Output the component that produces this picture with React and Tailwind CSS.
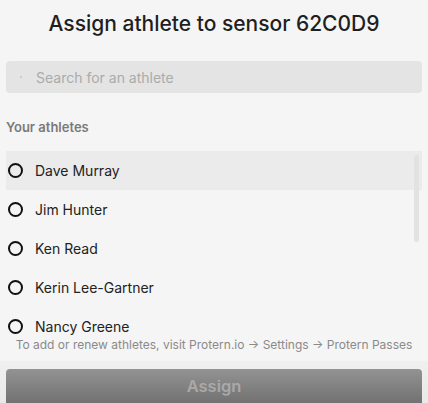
import React from 'react';

const athletes = ['Dave Murray', 'Jim Hunter', 'Ken Read', 'Kerin Lee-Gartner', 'Nancy Greene', 'Steve Podborski'];

const App = () => {
  return (
    <div
      className="w-[428px] h-[403px] overflow-hidden bg-[#f5f5f5] flex flex-col"
      style={{ fontFamily: 'Inter, "Noto Sans", sans-serif' }}
    >
      <h1 className="shrink-0 pt-[10px] h-[48px] text-center text-[21px] font-medium text-[#1f1f1f] leading-[28px]">
        Assign athlete to sensor 62C0D9
      </h1>

      <div className="shrink-0 mx-[6px] mt-[13px] h-[32px] rounded-[4px] bg-[#e4e4e4] flex items-center">
        <span className="ml-[14px] w-[2px] h-[2px] rounded-full bg-[#c4c4c4]" />
        <span className="ml-[14px] text-[14px] text-[#ababab]">Search for an athlete</span>
      </div>

      <div className="shrink-0 mt-[25px] px-[6px] text-[13px] font-semibold text-[#7a7a7a] leading-[18px]">
        Your athletes
      </div>

      <div className="shrink-0 relative mt-[15px] h-[186px] overflow-hidden">
        <ul className="flex flex-col">
          {athletes.map((name, i) => (
            <li
              key={name}
              className={
                'shrink-0 mx-[6px] h-[39px] flex items-center ' +
                (i === 0 ? 'bg-[#ebebeb]' : '')
              }
            >
              <span className="ml-[2px] w-[15px] h-[15px] rounded-full border-2 border-[#111]" />
              <span className="ml-[12px] text-[14px] text-[#222]">{name}</span>
            </li>
          ))}
        </ul>
        <div className="absolute left-[414px] top-[4px] w-[5px] h-[87px] rounded-full bg-[#e2e2e2]" />
      </div>

      <div className="shrink-0 text-center whitespace-nowrap text-[12px] text-[#8a8a8a] leading-[16px]">
        To add or renew athletes, visit Protern.io → Settings → Protern Passes
      </div>

      <div className="shrink-0 mt-[8px] h-[60px] bg-gradient-to-b from-[#f0f0f0] to-[#e6e6e6] px-[6px] pt-[8px]">
        <button className="w-full h-[40px] rounded-t-[4px] bg-gradient-to-b from-[#939393] to-[#6c6c6c] text-[16.5px] font-semibold text-[#a9a9a9] pb-[6px]">
          Assign
        </button>
      </div>
    </div>
  );
};

export default App;
